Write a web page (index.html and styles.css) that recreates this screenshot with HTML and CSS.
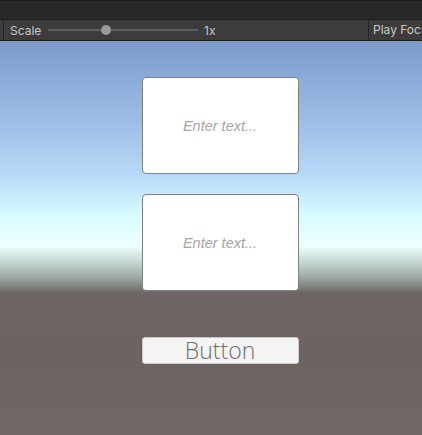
FILE: index.html
```html
<!DOCTYPE html>
<html lang="en">
<head>
    <meta charset="UTF-8">
    <title>Game View</title>
    <link rel="stylesheet" href="styles.css">
</head>
<body>
    <div class="tabbar"></div>
    <div class="toolbar">
        <div class="scale">
            <span class="label">Scale</span>
            <div class="slider"><div class="track"></div><div class="thumb"></div></div>
            <span class="value">1x</span>
        </div>
        <div class="play-focus">Play Focused</div>
    </div>
    <div class="game">
        <div class="field"><span class="placeholder">Enter text...</span></div>
        <div class="field second"><span class="placeholder">Enter text...</span></div>
        <div class="button">Button</div>
    </div>
</body>
</html>
```

FILE: styles.css
```css
html, body {
    margin: 0;
    height: 100%;
    overflow: hidden;
}
body {
    font-family: "Inter", "Liberation Sans", sans-serif;
    background: #282828;
    display: flex;
    flex-direction: column;
}
.tabbar {
    height: 19px;
    background: #282828;
    border-top: 1px solid #1b1b1b;
    box-sizing: border-box;
}
.toolbar {
    height: 22px;
    background: #3c3c3c;
    border-top: 1px solid #1e1e1e;
    border-bottom: 1px solid #191919;
    box-sizing: border-box;
    display: flex;
    align-items: center;
    color: #c8c8c8;
    font-size: 12px;
}
.scale {
    flex: 1;
    display: flex;
    align-items: center;
    padding-left: 6px;
    border-left: 1px solid #252525;
    margin-left: 3px;
    height: 100%;
    box-sizing: border-box;
}
.label {
    width: 38px;
}
.slider {
    position: relative;
    width: 150px;
    height: 10px;
}
.track {
    margin-top: 4px;
    height: 2px;
    background: #5e5e5e;
}
.thumb {
    position: absolute;
    left: 53px;
    top: 0;
    width: 10px;
    height: 10px;
    border-radius: 50%;
    background: #999999;
}
.value {
    margin-left: 6px;
}
.play-focus {
    width: 49px;
    height: 100%;
    padding-left: 4px;
    border-left: 1px solid #262626;
    white-space: nowrap;
    overflow: hidden;
    line-height: 20px;
}
.game {
    flex: 1;
    display: flex;
    flex-direction: column;
    align-items: center;
    padding-top: 36px;
    padding-left: 18px;
    background: linear-gradient(to bottom,
        #7b9bcc 0%,
        #9fc1e8 22%,
        #b7daf8 34%,
        #d6fbff 44%,
        #edfffe 52%,
        #c6d7d4 56%,
        #9ea9a5 60%,
        #6d6664 64%,
        #6b6461 80%,
        #6f6864 100%);
}
.field {
    width: 155px;
    height: 95px;
    background: #ffffff;
    border: 1px solid #808080;
    border-radius: 4px;
    display: flex;
    align-items: center;
    justify-content: center;
}
.second {
    margin-top: 20px;
}
.placeholder {
    font-family: "Liberation Sans", Arial, sans-serif;
    font-style: italic;
    font-size: 14.5px;
    color: #a6a6a6;
}
.button {
    margin-top: 46px;
    width: 155px;
    height: 25px;
    background: #f4f4f4;
    border: 1px solid #c9c9c9;
    border-radius: 3px;
    text-align: center;
    font-family: "Open Sans", sans-serif;
    font-weight: 300;
    font-size: 23px;
    line-height: 25px;
    color: #6e6e6e;
}
```
